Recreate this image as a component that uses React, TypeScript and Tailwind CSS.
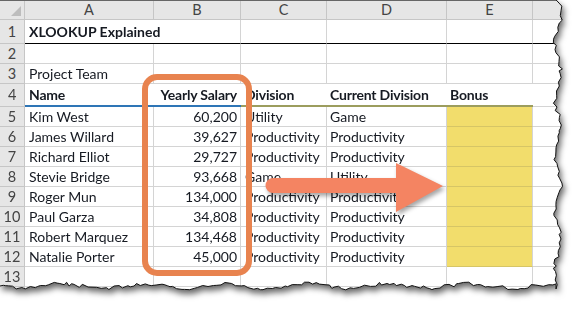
import React from 'react';

const rows = [
  { name: 'Kim West', salary: '60,200', division: 'Utility', current: 'Game' },
  { name: 'James Willard', salary: '39,627', division: 'Productivity', current: 'Productivity' },
  { name: 'Richard Elliot', salary: '29,727', division: 'Productivity', current: 'Productivity' },
  { name: 'Stevie Bridge', salary: '93,668', division: 'Game', current: 'Utility' },
  { name: 'Roger Mun', salary: '134,000', division: 'Productivity', current: 'Productivity' },
  { name: 'Paul Garza', salary: '34,808', division: 'Productivity', current: 'Productivity' },
  { name: 'Robert Marquez', salary: '134,468', division: 'Productivity', current: 'Productivity' },
  { name: 'Natalie Porter', salary: '45,000', division: 'Productivity', current: 'Productivity' },
];

// jagged torn-paper edge, right side then bottom
function tornEdge() {
  let s = 7919;
  const rand = () => {
    s = (s * 16807) % 2147483647;
    return (s - 1) / 2147483646;
  };
  const right: [number, number][] = [];
  for (let y = 0; y < 287; y += 2 + rand() * 3) {
    right.push([558 + 3 * Math.sin(y / 9) + (rand() - 0.5) * 4, y]);
  }
  const bottom: [number, number][] = [];
  for (let x = 556; x > 0; x -= 2 + rand() * 4) {
    bottom.push([x, 286 + 2 * Math.sin(x / 13) + (rand() - 0.5) * 4]);
  }
  bottom.push([0, 286]);
  return [...right, [556, 289] as [number, number], ...bottom];
}

const edge = tornEdge();
const clip = `polygon(0px 0px, ${edge.map(([x, y]) => `${x.toFixed(1)}px ${y.toFixed(1)}px`).join(', ')})`;
const line = edge.map(([x, y]) => `${x.toFixed(1)},${y.toFixed(1)}`).join(' ');

const cell = 'flex items-end border-r border-b border-[#d4d4d4] overflow-hidden whitespace-nowrap';
const rowHead = 'w-[25px] shrink-0 flex items-end justify-center border-r border-b border-[#c6c6c6] bg-[#e6e6e6] text-[#444] text-[14.5px]';

export default function App() {
  return (
    <div className="w-[584px] h-[313px] bg-white relative overflow-hidden" style={{ fontFamily: 'Lato, "Open Sans", sans-serif' }}>
      <div className="relative w-[570px] h-[300px] [filter:drop-shadow(2px_4px_3px_rgba(0,0,0,0.6))]">
        <div className="w-[570px] h-[300px] bg-white text-[14px] leading-[18px] text-[#161a22]" style={{ clipPath: clip }}>
          {/* column letters */}
          <div className="flex h-[20px] bg-[#e6e6e6] text-[#444] text-[14.5px] border-t border-[#666]">
            <div className="w-[25px] shrink-0 relative border-r border-b border-[#c6c6c6]">
              <svg className="absolute inset-0" width="25" height="19">
                <polygon points="11,15 21,15 21,5" fill="#bdbdbd" />
              </svg>
            </div>
            <div className="w-[129px] shrink-0 flex items-end justify-center border-r border-b border-[#c6c6c6]">A</div>
            <div className="w-[87px] shrink-0 flex items-end justify-center border-r border-b border-[#c6c6c6]">B</div>
            <div className="w-[86px] shrink-0 flex items-end justify-center border-r border-b border-[#c6c6c6]">C</div>
            <div className="w-[120px] shrink-0 flex items-end justify-center border-r border-b border-[#c6c6c6]">D</div>
            <div className="w-[86px] shrink-0 flex items-end justify-center border-r border-b border-[#c6c6c6]">E</div>
            <div className="flex-1 border-b border-[#c6c6c6]" />
          </div>

          {/* row 1 */}
          <div className="flex h-[24px]">
            <div className={`${rowHead} pb-[2px]`}>1</div>
            <div className="w-[129px] shrink-0 relative z-10 flex items-end pl-[4px] pb-[2px] font-bold whitespace-nowrap border-b border-black overflow-visible">
              XLOOKUP Explained
            </div>
            <div className="w-[87px] shrink-0 border-r border-b border-r-[#d4d4d4] border-b-black" />
            <div className="w-[86px] shrink-0 border-r border-b border-r-[#d4d4d4] border-b-black" />
            <div className="w-[120px] shrink-0 border-r border-b border-r-[#d4d4d4] border-b-black" />
            <div className="w-[86px] shrink-0 border-r border-b border-r-[#d4d4d4] border-b-black" />
            <div className="flex-1 border-b border-black" />
          </div>

          {/* row 2 */}
          <div className="flex h-[20px]">
            <div className={rowHead}>2</div>
            <div className={`${cell} w-[129px] shrink-0`} />
            <div className={`${cell} w-[87px] shrink-0`} />
            <div className={`${cell} w-[86px] shrink-0`} />
            <div className={`${cell} w-[120px] shrink-0`} />
            <div className={`${cell} w-[86px] shrink-0`} />
            <div className={`${cell} flex-1`} />
          </div>

          {/* row 3 */}
          <div className="flex h-[20px]">
            <div className={rowHead}>3</div>
            <div className={`${cell} w-[129px] shrink-0 pl-[4px]`}>Project Team</div>
            <div className={`${cell} w-[87px] shrink-0`} />
            <div className={`${cell} w-[86px] shrink-0`} />
            <div className={`${cell} w-[120px] shrink-0`} />
            <div className={`${cell} w-[86px] shrink-0`} />
            <div className={`${cell} flex-1`} />
          </div>

          {/* row 4 headers */}
          <div className="flex h-[23px] font-bold tracking-[-0.2px]">
            <div className={`${rowHead} pb-[2px]`}>
              <span className="font-normal">4</span>
            </div>
            <div className="w-[129px] shrink-0 flex items-end pl-[4px] pb-[1px] border-b-2 border-[#2e75b6]">Name</div>
            <div className="w-[87px] shrink-0 flex items-end justify-end pr-[4px] pb-[1px] border-b-2 border-[#2e75b6] whitespace-nowrap">Yearly Salary</div>
            <div className="w-[86px] shrink-0 flex items-end pl-[4px] pb-[1px] border-b-2 border-[#9c9d5e]">Division</div>
            <div className="w-[120px] shrink-0 flex items-end pl-[3px] pb-[1px] border-b-2 border-[#9c9d5e]">Current Division</div>
            <div className="w-[86px] shrink-0 flex items-end pl-[3px] pb-[1px] border-b-2 border-[#9c9d5e]">Bonus</div>
            <div className="flex-1 border-b border-[#d4d4d4]" />
          </div>

          {/* data rows */}
          {rows.map((r, i) => (
            <div key={r.name} className="flex h-[20px]">
              <div className={rowHead}>{i + 5}</div>
              <div className={`${cell} w-[129px] shrink-0 pl-[4px]`}>{r.name}</div>
              <div className={`${cell} w-[87px] shrink-0 justify-end pr-[3px]`}>{r.salary}</div>
              <div className={`${cell} w-[86px] shrink-0 pl-[4px]`}>{r.division}</div>
              <div className={`${cell} w-[120px] shrink-0 pl-[3px]`}>{r.current}</div>
              <div className="w-[86px] shrink-0 bg-[#f2dd6c] border-b border-[#d6c566] border-r border-r-[#d4d4d4]" />
              <div className={`${cell} flex-1`} />
            </div>
          ))}

          {/* row 13 */}
          <div className="flex h-[20px]">
            <div className={rowHead}>13</div>
            <div className={`${cell} w-[129px] shrink-0`} />
            <div className={`${cell} w-[87px] shrink-0`} />
            <div className={`${cell} w-[86px] shrink-0`} />
            <div className={`${cell} w-[120px] shrink-0`} />
            <div className={`${cell} w-[86px] shrink-0`} />
            <div className={`${cell} flex-1`} />
          </div>
          <div className="flex h-[20px]">
            <div className="w-[25px] shrink-0 bg-[#e6e6e6] border-r border-[#c6c6c6]" />
          </div>
        </div>

        {/* torn edge outline */}
        <svg className="absolute inset-0 pointer-events-none" width="570" height="300">
          <polyline points={line} fill="none" stroke="#111" strokeWidth="1" />
        </svg>
      </div>

      {/* highlight around salary column */}
      <div className="absolute left-[142px] top-[74px] w-[110px] h-[202px] rounded-[15px] border-[6px] border-[#e8834f]" />

      {/* arrow toward bonus */}
      <svg className="absolute left-0 top-0 pointer-events-none [filter:drop-shadow(2px_3px_2px_rgba(0,0,0,0.35))]" width="584" height="313">
        <path d="M273 178 L396 178 L396 163 L443 186 L396 212 L396 193 L273 193 A7.5 7.5 0 0 1 273 178 Z" fill="#f48462" />
      </svg>
    </div>
  );
}
